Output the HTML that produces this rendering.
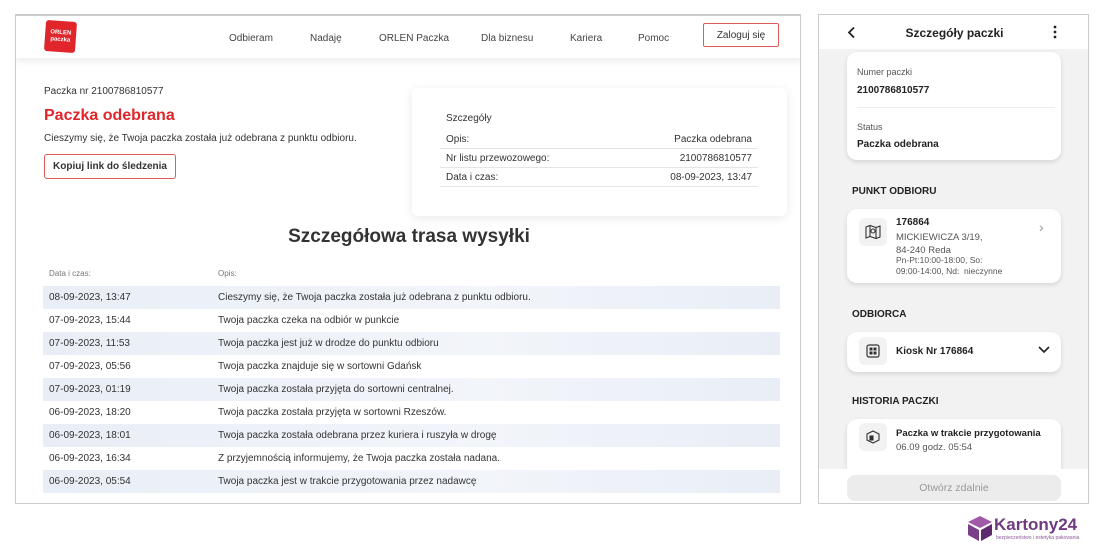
<!DOCTYPE html>
<html><head><meta charset="utf-8"><style>
*{margin:0;padding:0;box-sizing:border-box}
body{width:1100px;height:550px;background:#fff;font-family:"Liberation Sans",sans-serif;color:#333;position:relative;overflow:hidden}
.a{position:absolute}
.web{left:15px;top:14px;width:786px;height:490px;border:1px solid #ccc;border-top:2px solid #ccc;overflow:hidden}
.nav{left:0;top:0;width:786px;height:42px;background:#fff;box-shadow:0 3px 8px rgba(0,0,0,.08)}
.nav span{position:absolute;top:17px;font-size:10px;color:#444}
.t{font-size:10px;color:#333}
.row{position:absolute;left:27px;width:737px;height:23px;font-size:10px;color:#333}
.row.s{background:linear-gradient(90deg,#e9eef6,#f2f5fa 60%,#e9eef6)}
.row b{font-weight:normal;position:absolute;left:6px;top:6px}
.row i{font-style:normal;position:absolute;left:175px;top:6px}
.ph{left:818px;top:14px;width:271px;height:490px;border:1px solid #ccc;background:#f2f2f2;overflow:hidden}
.card{position:absolute;background:#fff;border-radius:10px;box-shadow:0 2px 5px rgba(0,0,0,.12)}
.h{position:absolute;font-size:10px;font-weight:bold;color:#222}
.btn{display:flex;align-items:center;justify-content:center}
</style></head><body>
<div class="a web">
 <div class="a nav">
  <div class="a" style="left:29px;top:5px;width:31px;height:31px;background:#e0262a;border-radius:3px;transform:rotate(4deg);color:#fff;font-size:6px;font-weight:bold;text-align:center;line-height:7px;padding-top:9px">ORLEN<br>paczka</div>
  <span style="left:213px">Odbieram</span>
  <span style="left:294px">Nadaję</span>
  <span style="left:363px">ORLEN Paczka</span>
  <span style="left:465px">Dla biznesu</span>
  <span style="left:554px">Kariera</span>
  <span style="left:622px">Pomoc</span>
  <div class="a btn" style="left:687px;top:7px;width:76px;height:24px;border:1.5px solid #e05a5a;border-radius:2px;font-size:10px;color:#333">Zaloguj się</div>
 </div>
 <div class="a t" style="left:28px;top:70px">Paczka nr 2100786810577</div>
 <div class="a" style="left:28px;top:91px;font-size:16px;font-weight:bold;color:#e0262a">Paczka odebrana</div>
 <div class="a t" style="left:28px;top:117px">Cieszymy się, że Twoja paczka została już odebrana z punktu odbioru.</div>
 <div class="a btn" style="left:28px;top:138px;width:132px;height:25px;border:1.5px solid #e05a5a;border-radius:3px;font-size:10px;font-weight:bold;color:#333">Kopiuj link do śledzenia</div>
 <div class="a" style="left:396px;top:72px;width:375px;height:128px;background:#fff;border-radius:6px;box-shadow:0 2px 10px rgba(0,0,0,.09)"></div>
 <div class="a t" style="left:430px;top:97px">Szczegóły</div>
 <div class="a" style="left:424px;top:114px;width:318px;border-bottom:1px solid #e5e5e5;height:19px"><span class="a t" style="left:6px;top:4px">Opis:</span><span class="a t" style="right:6px;top:4px">Paczka odebrana</span></div>
 <div class="a" style="left:424px;top:133px;width:318px;border-bottom:1px solid #e5e5e5;height:19px"><span class="a t" style="left:6px;top:4px">Nr listu przewozowego:</span><span class="a t" style="right:6px;top:4px">2100786810577</span></div>
 <div class="a" style="left:424px;top:152px;width:318px;border-bottom:1px solid #e5e5e5;height:19px"><span class="a t" style="left:6px;top:4px">Data i czas:</span><span class="a t" style="right:6px;top:4px">08-09-2023, 13:47</span></div>
 <div class="a" style="left:0;width:786px;top:210px;text-align:center;font-size:19px;font-weight:bold;color:#333">Szczegółowa trasa wysyłki</div>
 <div class="a" style="left:33px;top:253px;font-size:8px;color:#777">Data i czas:</div>
 <div class="a" style="left:202px;top:253px;font-size:8px;color:#777">Opis:</div>
 <div class="row s" style="top:270px"><b>08-09-2023, 13:47</b><i>Cieszymy się, że Twoja paczka została już odebrana z punktu odbioru.</i></div>
 <div class="row" style="top:293px"><b>07-09-2023, 15:44</b><i>Twoja paczka czeka na odbiór w punkcie</i></div>
 <div class="row s" style="top:316px"><b>07-09-2023, 11:53</b><i>Twoja paczka jest już w drodze do punktu odbioru</i></div>
 <div class="row" style="top:339px"><b>07-09-2023, 05:56</b><i>Twoja paczka znajduje się w sortowni Gdańsk</i></div>
 <div class="row s" style="top:362px"><b>07-09-2023, 01:19</b><i>Twoja paczka została przyjęta do sortowni centralnej.</i></div>
 <div class="row" style="top:385px"><b>06-09-2023, 18:20</b><i>Twoja paczka została przyjęta w sortowni Rzeszów.</i></div>
 <div class="row s" style="top:408px"><b>06-09-2023, 18:01</b><i>Twoja paczka została odebrana przez kuriera i ruszyła w drogę</i></div>
 <div class="row" style="top:431px"><b>06-09-2023, 16:34</b><i>Z przyjemnością informujemy, że Twoja paczka została nadana.</i></div>
 <div class="row s" style="top:454px"><b>06-09-2023, 05:54</b><i>Twoja paczka jest w trakcie przygotowania przez nadawcę</i></div>
</div>

<div class="a ph">
 <div class="a" style="left:0;top:0;width:271px;height:34px;background:#fff"></div>
 <svg class="a" style="left:28px;top:11px" width="9" height="13" viewBox="0 0 9 13"><path d="M7 1.5L2 6.5l5 5" fill="none" stroke="#222" stroke-width="1.8"/></svg>
 <div class="a" style="left:0;width:271px;top:11px;text-align:center;font-size:12px;font-weight:bold;color:#222">Szczegóły paczki</div>
 <svg class="a" style="left:234px;top:10px" width="4" height="14" viewBox="0 0 4 14"><circle cx="2" cy="2" r="1.4" fill="#222"/><circle cx="2" cy="7" r="1.4" fill="#222"/><circle cx="2" cy="12" r="1.4" fill="#222"/></svg>
 <div class="card" style="left:28px;top:37px;width:214px;height:108px"></div>
 <div class="a" style="left:38px;top:52px;font-size:9px;color:#555">Numer paczki</div>
 <div class="h" style="left:38px;top:70px">2100786810577</div>
 <div class="a" style="left:38px;top:92px;width:198px;border-top:1px solid #eee"></div>
 <div class="a" style="left:38px;top:107px;font-size:9px;color:#555">Status</div>
 <div class="h" style="left:38px;top:124px">Paczka odebrana</div>
 <div class="h" style="left:33px;top:171px">PUNKT ODBIORU</div>
 <div class="card" style="left:28px;top:194px;width:214px;height:74px"></div>
 <div class="a" style="left:40px;top:203px;width:28px;height:28px;background:#f2f2f2;border-radius:6px"></div>
 <svg class="a" style="left:46px;top:209px" width="16" height="16" viewBox="0 0 16 16" fill="none" stroke="#333" stroke-width="1.1"><path d="M1 3l4-1.5 6 2 4-1.5v11l-4 1.5-6-2-4 1.5z M5 1.5v11 M11 3.5v11"/><circle cx="8" cy="7" r="2"/></svg>
 <div class="h" style="left:77px;top:202px">176864</div>
 <div class="a" style="left:77px;top:216px;font-size:9.5px;color:#555;line-height:13px">MICKIEWICZA 3/19,<br>84-240 Reda</div>
 <div class="a" style="left:77px;top:240px;font-size:8.5px;color:#555;line-height:11px">Pn-Pt:10:00-18:00, So:<br>09:00-14:00, Nd:&nbsp; nieczynne</div>
 <div class="a" style="left:220px;top:204px;font-size:14px;color:#999">›</div>
 <div class="h" style="left:33px;top:294px">ODBIORCA</div>
 <div class="card" style="left:28px;top:317px;width:214px;height:40px"></div>
 <div class="a" style="left:40px;top:322px;width:28px;height:28px;background:#f2f2f2;border-radius:6px"></div>
 <svg class="a" style="left:47px;top:329px" width="14" height="14" viewBox="0 0 14 14"><rect x="1" y="1" width="12" height="12" rx="2" fill="none" stroke="#333" stroke-width="1.2"/><rect x="3.5" y="3.5" width="3" height="3" fill="#333"/><rect x="7.5" y="3.5" width="3" height="3" fill="#333"/><rect x="3.5" y="7.5" width="3" height="3" fill="#333"/><rect x="7.5" y="7.5" width="3" height="3" fill="#333"/></svg>
 <div class="h" style="left:77px;top:331px">Kiosk Nr 176864</div>
 <svg class="a" style="left:219px;top:331px" width="12" height="8" viewBox="0 0 12 8"><path d="M1 1l5 5 5-5" fill="none" stroke="#222" stroke-width="1.6"/></svg>
 <div class="h" style="left:33px;top:381px">HISTORIA PACZKI</div>
 <div class="card" style="left:28px;top:404px;width:214px;height:60px"></div>
 <div class="a" style="left:40px;top:408px;width:28px;height:28px;background:#f2f2f2;border-radius:6px"></div>
 <svg class="a" style="left:47px;top:415px" width="14" height="14" viewBox="0 0 14 14" fill="none" stroke="#333" stroke-width="1.1"><path d="M7 1l6 3v6l-6 3-6-3V4z"/><rect x="4" y="6" width="3" height="4" fill="#333"/></svg>
 <div class="h" style="left:77px;top:413px;font-size:9.5px">Paczka w trakcie przygotowania</div>
 <div class="a" style="left:77px;top:427px;font-size:9.5px;color:#555">06.09 godz. 05:54</div>
 <div class="a" style="left:0;top:454px;width:271px;height:36px;background:#fff"></div>
 <div class="a" style="left:28px;top:460px;width:214px;height:26px;background:#ececec;border-radius:8px;text-align:center;line-height:26px;font-size:10.5px;color:#999">Otwórz zdalnie</div>
</div>

<svg class="a" style="left:966px;top:514px" width="30" height="28" viewBox="0 0 30 28"><path d="M2 8l12-6 12 6-12 6z" fill="#a05aa8"/><path d="M2 10l11 6v11L2 21z" fill="#7b3f8a"/><path d="M15 16l11-6v11l-11 6z" fill="#5e2a6e"/></svg>
<div class="a" style="left:994px;top:515px;font-size:17px;font-weight:bold;color:#6f3b80">Kartony24</div>
<div class="a" style="left:996px;top:535px;font-size:5px;color:#8a5a98">bezpieczeństwo i estetyka pakowania</div>
</body></html>
